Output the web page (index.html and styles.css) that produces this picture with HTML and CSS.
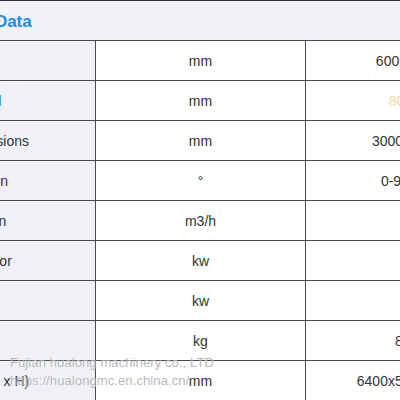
FILE: index.html
```html
<!DOCTYPE html>
<html>
<head>
<meta charset="utf-8">
<link rel="stylesheet" href="styles.css">
</head>
<body>
<div class="page">
  <div class="header"><h2 class="title">Technical Data</h2></div>
  <table class="spec">
    <colgroup><col class="c1"><col class="c2"><col class="c3"></colgroup>
    <tbody>
      <tr><td class="label">Model</td><td>mm</td><td>600 x 1000</td></tr>
      <tr><td class="label link">Discharge level</td><td>mm</td><td class="hint">80-120</td></tr>
      <tr><td class="label">Outside dimensions</td><td>mm</td><td>3000 x 2000</td></tr>
      <tr><td class="label">Angle of rotation</td><td>°</td><td>0-90 deg.</td></tr>
      <tr><td class="label">Air consumption</td><td>m3/h</td><td>10</td></tr>
      <tr><td class="label">Power of vibrator</td><td>kw</td><td>5.5</td></tr>
      <tr><td class="label">Heating power</td><td>kw</td><td>18</td></tr>
      <tr><td class="label">Weight</td><td>kg</td><td>8000</td></tr>
      <tr><td class="label">Packing (L x W x H)</td><td>mm</td><td>6400x5000x3000</td></tr>
    </tbody>
  </table>
  <div class="watermark">
    <span>Fujian hualong machinery co., LTD</span>
    <span>https://hualongmc.en.china.cn/</span>
  </div>
</div>
</body>
</html>
```
FILE: styles.css
```css
html, body {
  margin: 0;
  padding: 0;
  width: 400px;
  height: 400px;
  overflow: hidden;
  background: #ffffff;
}

.page {
  position: relative;
  margin-left: -110px;
  width: 640px;
  border-top: 1px solid #333333;
  font-family: "Liberation Sans", Arial, sans-serif;
  color: #333333;
}

.header {
  height: 39px;
  background: #f0f2f7;
  display: flex;
  align-items: center;
  padding-left: 23px;
}

.title {
  margin: 0;
  font-size: 17px;
  font-weight: bold;
  color: #1a8ee6;
  padding-top: 2px;
}

.spec {
  border-collapse: collapse;
  table-layout: fixed;
  width: 625px;
  font-size: 14px;
}

.c1 { width: 205px; }
.c2 { width: 210px; }
.c3 { width: 210px; }

.spec td {
  height: 39px;
  padding: 0 15px;
  border: 1px solid #4a4a4a;
  text-align: center;
  white-space: nowrap;
  color: #333333;
}

.spec td.label {
  text-align: left;
  background: #f0f1f6;
}

.spec td.link {
  color: #2a9af0;
}

.spec td.hint {
  color: #f3d9a0;
}

.watermark {
  position: absolute;
  left: 120px;
  top: 353px;
  display: flex;
  flex-direction: column;
  font-size: 13px;
  line-height: 18px;
  letter-spacing: 0.1px;
  color: rgba(120, 120, 120, 0.55);
  text-shadow: 0 0 1px rgba(255, 255, 255, 0.9);
  pointer-events: none;
}
```
